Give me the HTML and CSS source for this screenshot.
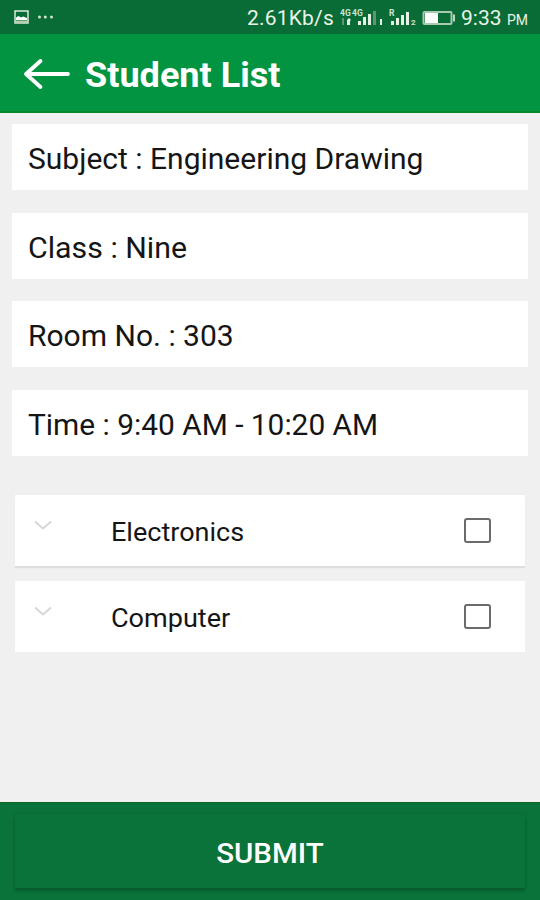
FILE: index.html
```html
<!DOCTYPE html>
<html lang="en">
<head>
<meta charset="utf-8">
<title>Student List</title>
<link rel="stylesheet" href="styles.css">
</head>
<body>
<div class="screen">
  <div class="status">
    <svg class="notices" width="44" height="20" viewBox="0 0 44 20">
      <rect x="1" y="4" width="13" height="12" fill="none" stroke="#dcebdc" stroke-width="1.5"/>
      <path d="M2 13V10.500L4.500 9L7 10.500L9 9.500L13 11V13Z" fill="#fff"/>
      <path d="M1 14.500H14" stroke="#b9d2ae" stroke-width="2"/>
      <g fill="#d5e6cf"><circle cx="25.500" cy="10" r="1.500"/><circle cx="31.300" cy="10" r="1.500"/><circle cx="37.500" cy="10" r="1.500"/></g>
    </svg>
    <span class="speed">2.61Kb/s</span>
    <svg class="signals" width="118" height="24" viewBox="338 6 118 24">
      <g class="tiny"><text x="340" y="16">4G</text><text x="352" y="16">4G</text><text x="389" y="16">R</text></g>
      <g fill="#e7f2e5">
        <path d="M347 20l2-2 2 2-1 1v4h-3v-4zM358 21h3v4h-3zM363 17h3v8h-3zM368 14h3v11h-3zM380 19h2v6h-2z"/>
        <path d="M391 21h3v4h-3zM396 18h3v7h-3zM401 15h3v10h-3zM406 12h3v13h-3z"/>
      </g>
      <path d="M342 18h2v7h-2zM373 11h3v14h-3z" fill="#5d9770"/>
      <text class="sim" x="411" y="25">2</text>
      <rect x="423.500" y="12" width="28" height="12" rx="1" fill="none" stroke="#a9caae" stroke-width="2"/>
      <path d="M425 13h13v10h-13z" fill="#fff"/>
      <path d="M453 14.500h2v7h-2z" fill="#b9d5bb"/>
    </svg>
    <span class="clock">9:33</span><span class="meridiem">PM</span>
  </div>
  <header class="bar">
    <svg class="back" width="48" height="34" viewBox="0 0 48 34"><path d="M18.500 4L4 17L18.500 30M4 17H46" fill="none" stroke="#fff" stroke-width="3.800" stroke-linecap="round" stroke-linejoin="round"/></svg>
    <h1>Student List</h1>
  </header>
  <main>
    <section class="details">
      <div class="detail"><span>Subject : Engineering Drawing</span></div>
      <div class="detail"><span class="short">Class : Nine</span></div>
      <div class="detail"><span>Room No. : 303</span></div>
      <div class="detail"><span class="time">Time : 9:40 AM - 10:20 AM</span></div>
    </section>
    <section class="groups">
      <div class="group raised">
        <svg class="chevron" width="18" height="11" viewBox="0 0 18 11"><path d="M1 1.500L9 8.500L17 1.500" fill="none" stroke="#d6d6d6" stroke-width="2"/></svg>
        <span class="name">Electronics</span><span class="check"></span>
      </div>
      <div class="group">
        <svg class="chevron" width="18" height="11" viewBox="0 0 18 11"><path d="M1 1.500L9 8.500L17 1.500" fill="none" stroke="#d6d6d6" stroke-width="2"/></svg>
        <span class="name">Computer</span><span class="check"></span>
      </div>
    </section>
  </main>
  <footer><button class="submit"><span>SUBMIT</span></button></footer>
</div>
</body>
</html>
```
FILE: styles.css
```css
* { box-sizing: border-box; }
body { margin: 0; font-family: Roboto, sans-serif; color: #151515; background: #f0f0f0; }
.screen { width: 540px; height: 900px; display: flex; flex-direction: column; overflow: hidden; }
.status { height: 34px; flex: none; display: flex; align-items: center; background: #096b36; color: #e9f4e7; padding: 2px 12px 0 14px; white-space: nowrap; }
.notices { flex: none; margin-top: -2px; }
.speed { margin-left: 189px; width: 91px; flex: none; font-size: 21px; letter-spacing: 0.200px; }
.signals { flex: none; }
.tiny { font: bold 8.500px Roboto, sans-serif; fill: #cfe3cf; }
.sim { font: bold 8px Roboto, sans-serif; fill: #cfe3cf; }
.clock { font-size: 21px; margin-left: 5px; width: 46px; flex: none; }
.meridiem { font-size: 14px; padding-top: 4px; }
.bar { height: 79px; flex: none; display: flex; align-items: center; background: #029440; border-bottom: 2px solid #05892b; padding-left: 22px; }
.back { flex: none; margin-top: 2px; }
h1 { margin: 6px 0 0 15px; font-size: 35px; line-height: 40px; font-weight: 700; color: #fff; white-space: nowrap; transform: scaleX(1.03); transform-origin: left; }
main { flex: 1; }
.details { padding: 11px 12px 0; display: flex; flex-direction: column; gap: 22.500px; }
.detail { height: 66px; display: flex; align-items: center; background: #fff; padding: 4px 0 0 15.500px; font-size: 29px; white-space: nowrap; }
.detail span { transform: scaleX(1.035); transform-origin: left; }
.detail .short { transform: scaleX(1.045); }
.detail .time { transform: scaleX(1.03); }
.groups { padding: 39.500px 15px 0; display: flex; flex-direction: column; gap: 15px; }
.group { height: 71px; display: flex; align-items: center; background: #fff; padding: 0 34px 0 19px; }
.raised { box-shadow: 0 2px 1px #dedede; }
.chevron { flex: none; margin-top: -11px; }
.name { flex: 1; margin-left: 59px; padding-top: 2px; font-size: 26px; transform: scaleX(1.04); transform-origin: left; }
.check { width: 27px; height: 25px; border: 2.500px solid #6b6b6b; border-radius: 3px; }
footer { height: 98px; flex: none; background: #0a7339; border-top: 1px solid #126622; padding: 11px 15px 12px; display: flex; }
.submit { flex: 1; border: 0; border-radius: 2px; background: #0a7339; color: #fff; font: 500 28.500px Roboto, sans-serif; padding: 5px 0 0; box-shadow: 0 3px 3px #075c2c, 0 0 3px #086a34; }
.submit span { display: inline-block; transform: scaleX(1.035); }
```
